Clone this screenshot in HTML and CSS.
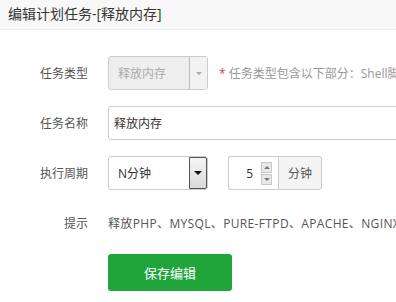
FILE: index.html
```html
<!DOCTYPE html>
<html lang="zh-CN">
<head>
  <meta charset="UTF-8" />
  <title>编辑计划任务</title>
  <link rel="stylesheet" href="styles.css">
</head>
<body>
  <div class="layer-title">编辑计划任务-[释放内存]</div>

  <form class="task-form">
    <div class="line">
      <span class="tname">任务类型</span>
      <div class="fake-select disabled">
        <span class="val">释放内存</span>
        <span class="drop"><i class="tri"></i></span>
      </div>
      <span class="tips"><em>*</em> 任务类型包含以下部分：Shell脚本、备份网站、备份数据库、日志切割、释放内存、访问URL</span>
    </div>

    <div class="line">
      <span class="tname">任务名称</span>
      <input class="bt-input" type="text" value="释放内存">
    </div>

    <div class="line">
      <span class="tname">执行周期</span>
      <div class="fake-select">
        <span class="val">N分钟</span>
        <span class="drop win"><i class="tri"></i></span>
      </div>
      <div class="input-group">
        <div class="num-box">
          <span class="num">5</span>
          <span class="spin">
            <span class="up"><i></i></span>
            <span class="down"><i></i></span>
          </span>
        </div>
        <span class="addon">分钟</span>
      </div>
    </div>

    <div class="line hint">
      <span class="tname">提示</span>
      <span class="hint-text">释放PHP、MYSQL、PURE-FTPD、APACHE、NGINX的内存占用,建议在每天半夜执行!</span>
    </div>

    <div class="line submit">
      <button type="button" class="btn-green">保存编辑</button>
    </div>
  </form>
</body>
</html>
```

FILE: styles.css
```css
* {
  margin: 0;
  padding: 0;
  box-sizing: border-box;
}

body {
  font-family: "Open Sans", "Noto Sans CJK SC", sans-serif;
  font-size: 12px;
  color: #555;
  background: #fff;
  overflow: hidden;
  white-space: nowrap;
}

.layer-title {
  height: 30px;
  line-height: 28px;
  padding-left: 8px;
  font-size: 14px;
  color: #333;
  background: #f8f8f8;
  border-bottom: 1px solid #eee;
}

.task-form {
  padding-top: 26px;
}

.line {
  display: flex;
  align-items: center;
  height: 34px;
  margin-bottom: 16px;
}

.tname {
  width: 88px;
  flex-shrink: 0;
  margin-right: 20px;
  text-align: right;
  color: #555;
}

/* selects */
.fake-select {
  display: flex;
  align-items: stretch;
  width: 100px;
  height: 34px;
  flex-shrink: 0;
  border: 1px solid #ccc;
  border-radius: 3px;
  background: #fff;
  color: #333;
}

.fake-select .val {
  flex: 1;
  display: flex;
  align-items: center;
  padding-left: 9px;
}

.fake-select .drop {
  width: 18px;
  display: flex;
  align-items: center;
  justify-content: center;
  border-left: 1px solid #ccc;
  background: #f4f4f4;
}

.fake-select .tri {
  width: 0;
  height: 0;
  border-left: 3px solid transparent;
  border-right: 3px solid transparent;
  border-top: 3px solid #aaa;
}

.fake-select.disabled {
  background: #eee;
  color: #aaa;
}

.fake-select.disabled .drop {
  background: #f2f2f2;
  border-left-color: #bbb;
}

.fake-select .drop.win {
  border: 1px solid #555;
  border-radius: 0 2px 2px 0;
  background: linear-gradient(#f6f6f6, #d9d9d9);
}

.fake-select .drop.win .tri {
  border-left-width: 4px;
  border-right-width: 4px;
  border-top: 4px solid #111;
}

.tips {
  margin-left: 11px;
  color: #999;
}

.tips em {
  font-style: normal;
  color: #e33;
}

/* text input */
.bt-input {
  width: 300px;
  height: 34px;
  flex-shrink: 0;
  padding-left: 5px;
  border: 1px solid #ccc;
  border-radius: 3px;
  font-family: inherit;
  font-size: 12px;
  color: #333;
  outline: none;
}

/* number + unit */
.input-group {
  display: flex;
  height: 34px;
  margin-left: 20px;
  flex-shrink: 0;
}

.num-box {
  display: flex;
  align-items: center;
  width: 50px;
  border: 1px solid #ccc;
  border-right: none;
  border-radius: 3px 0 0 3px;
  color: #333;
}

.num {
  width: 27px;
  text-align: right;
  padding-right: 3px;
}

.spin {
  display: flex;
  flex-direction: column;
  gap: 1px;
  margin-left: 5px;
}

.spin span {
  width: 11px;
  height: 11px;
  display: flex;
  align-items: center;
  justify-content: center;
  border: 1px solid #c8c8c8;
  background: #e8e8e8;
}

.spin i {
  width: 0;
  height: 0;
  border-left: 3px solid transparent;
  border-right: 3px solid transparent;
}

.spin .up i {
  border-bottom: 3px solid #777;
}

.spin .down i {
  border-top: 3px solid #777;
}

.addon {
  display: flex;
  align-items: center;
  padding: 0 9px;
  border: 1px solid #ccc;
  border-radius: 0 3px 3px 0;
  background: #f4f4f4;
  color: #555;
}

.hint {
  margin-bottom: 14px;
}

.hint-text {
  color: #555;
  letter-spacing: 0.35px;
}

.submit {
  padding-left: 108px;
  height: 37px;
}

.btn-green {
  width: 124px;
  height: 37px;
  border: none;
  border-radius: 3px;
  background: #20a53a;
  color: #fff;
  font-family: inherit;
  font-size: 13px;
  cursor: pointer;
}
```
